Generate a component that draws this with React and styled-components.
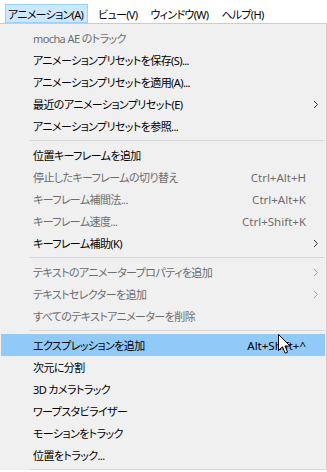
import styled, { createGlobalStyle } from "styled-components";

const GlobalStyle = createGlobalStyle`
  body {
    margin: 0;
    background: #ffffff;
    font-family: "Noto Sans", "Noto Sans CJK JP", sans-serif;
    font-feature-settings: "palt";
  }
`;

const Page = styled.div`
  position: relative;
  width: 327px;
  height: 472px;
  overflow: hidden;
`;

const MenuBar = styled.div`
  display: flex;
  align-items: center;
  height: 23px;
  padding-left: 5px;
  background: #ffffff;
`;

const BarItem = styled.div`
  box-sizing: border-box;
  height: 19px;
  margin-top: 4px;
  padding: 0 ${(p) => (p.$active ? "4px" : "9px")} 0 2px;
  margin-right: ${(p) => (p.$active ? "7px" : "0")};
  display: flex;
  align-items: center;
  font-size: 11px;
  letter-spacing: -0.7px;
  color: #000;
  border: 1px solid ${(p) => (p.$active ? "#99d1ff" : "transparent")};
  background: ${(p) => (p.$active ? "#cce8ff" : "transparent")};
`;

const Menu = styled.div`
  width: 324px;
  background: #f0f0f0;
  border-top: 1px solid #cccccc;
  border-right: 1px solid #cccccc;
  padding: 3px 1px 0 1px;
`;

const Item = styled.div`
  display: grid;
  grid-template-columns: 32px 1fr auto 19px;
  align-items: center;
  height: 22px;
  font-size: 11px;
  letter-spacing: -0.6px;
  color: ${(p) => (p.$disabled ? "#6d6d6d" : "#000000")};
  background: ${(p) => (p.$hover ? "#91c9f7" : "transparent")};
  white-space: nowrap;
`;

const Label = styled.span`
  grid-column: 2;
`;

const Shortcut = styled.span`
  grid-column: 3;
  text-align: right;
  font-size: 11.5px;
  letter-spacing: 0;
`;

const Arrow = styled.span`
  grid-column: 4;
  display: flex;
  justify-content: center;
  color: ${(p) => (p.$disabled ? "#a0a0a0" : "#333333")};
`;

const Separator = styled.div`
  height: 1px;
  margin: 3px 1px 3px 28px;
  background: #d7d7d7;
`;

const Cursor = styled.svg`
  position: absolute;
  left: 278px;
  top: 334px;
`;

const Chevron = () => (
  <svg width="6" height="9" viewBox="0 0 6 9">
    <path d="M1 1 L4.5 4.5 L1 8" fill="none" stroke="currentColor" strokeWidth="1" />
  </svg>
);

const groups = [
  [
    { label: "mocha AE のトラック", disabled: true },
    { label: "アニメーションプリセットを保存(S)..." },
    { label: "アニメーションプリセットを適用(A)..." },
    { label: "最近のアニメーションプリセット(E)", sub: true },
    { label: "アニメーションプリセットを参照..." },
  ],
  [
    { label: "位置キーフレームを追加" },
    { label: "停止したキーフレームの切り替え", key: "Ctrl+Alt+H", disabled: true },
    { label: "キーフレーム補間法...", key: "Ctrl+Alt+K", disabled: true },
    { label: "キーフレーム速度...", key: "Ctrl+Shift+K", disabled: true },
    { label: "キーフレーム補助(K)", sub: true },
  ],
  [
    { label: "テキストのアニメータープロパティを追加", sub: true, disabled: true },
    { label: "テキストセレクターを追加", sub: true, disabled: true },
    { label: "すべてのテキストアニメーターを削除", disabled: true },
  ],
  [
    { label: "エクスプレッションを追加", key: "Alt+Shift+^", hover: true },
    { label: "次元に分割" },
    { label: "3D カメラトラック" },
    { label: "ワープスタビライザー" },
    { label: "モーションをトラック" },
    { label: "位置をトラック..." },
  ],
];

const App = () => {
  return (
    <Page>
      <GlobalStyle />
      <MenuBar>
        <BarItem $active>アニメーション(A)</BarItem>
        <BarItem>ビュー(V)</BarItem>
        <BarItem>ウィンドウ(W)</BarItem>
        <BarItem>ヘルプ(H)</BarItem>
      </MenuBar>
      <Menu>
        {groups.map((group, gi) => (
          <div key={gi}>
            {group.map((it) => (
              <Item key={it.label} $disabled={it.disabled} $hover={it.hover}>
                <Label>{it.label}</Label>
                {it.key && <Shortcut>{it.key}</Shortcut>}
                {it.sub && (
                  <Arrow $disabled={it.disabled}>
                    <Chevron />
                  </Arrow>
                )}
              </Item>
            ))}
            <Separator />
          </div>
        ))}
      </Menu>
      <Cursor width="13" height="21" viewBox="0 0 13 21">
        <path
          d="M0.5 0.5 L0.5 16.5 L4.5 12.8 L7.2 19.2 L9.6 18.2 L7 12 L12 12 Z"
          fill="#ffffff"
          stroke="#000000"
          strokeWidth="1"
          strokeLinejoin="miter"
        />
      </Cursor>
    </Page>
  );
};

export default App;
